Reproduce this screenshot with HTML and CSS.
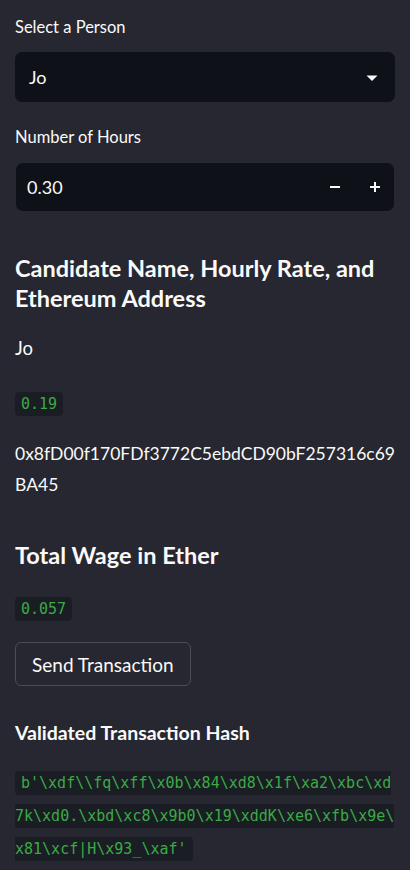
FILE: index.html
```html
<!DOCTYPE html>
<html lang="en">
<head>
<meta charset="utf-8">
<title>Sidebar</title>
<link rel="stylesheet" href="styles.css">
</head>
<body>
<aside class="sidebar">
  <div class="field">
    <label class="label">Select a Person</label>
    <div class="select">
      <span class="value">Jo</span>
      <svg class="caret" width="12" height="8" viewBox="0 0 12 8"><path d="M0.5 1.5h11L6 7z" fill="#fafafa"/></svg>
    </div>
  </div>
  <div class="field">
    <label class="label">Number of Hours</label>
    <div class="number">
      <span class="value">0.30</span>
      <span class="steps">
        <svg width="12" height="12" viewBox="0 0 12 12"><rect x="1" y="5" width="10" height="2" fill="#fafafa"/></svg>
        <svg width="12" height="12" viewBox="0 0 12 12"><rect x="1" y="5" width="10" height="2" fill="#fafafa"/><rect x="5" y="1" width="2" height="10" fill="#fafafa"/></svg>
      </span>
    </div>
  </div>
  <h3 class="h3 first">Candidate Name, Hourly Rate, and Ethereum Address</h3>
  <p class="text name">Jo</p>
  <p class="text codeline rate"><code class="code">0.19</code></p>
  <p class="text addr">0x8fD00f170FDf3772C5ebdCD90bF257316c69BA45</p>
  <h3 class="h3 second">Total Wage in Ether</h3>
  <p class="text codeline wage"><code class="code">0.057</code></p>
  <button class="btn">Send Transaction</button>
  <h4 class="h4">Validated Transaction Hash</h4>
  <p class="hash"><code class="code wrap">b'\xdf\\fq\xff\x0b\x84\xd8\x1f\xa2\xbc\xd7k\xd0.\xbd\xc8\x9b0\x19\xddK\xe6\xfb\x9e\x81\xcf|H\x93_\xaf'</code></p>
</aside>
</body>
</html>
```
FILE: styles.css
```css
html, body {
  margin: 0;
  padding: 0;
  background: #262730;
}
body {
  width: 410px;
  height: 870px;
  overflow: hidden;
  font-family: "Lato", "Open Sans", sans-serif;
  color: #fafafa;
}
.sidebar {
  padding: 16px 15px 0 15px;
  display: flex;
  flex-direction: column;
}
.field {
  display: flex;
  flex-direction: column;
  margin-bottom: 24px;
}
.field + .field { margin-bottom: 0; }
.label {
  font-size: 16.5px;
  line-height: 22px;
  margin-bottom: 14px;
}
.field + .field .label { margin-bottom: 15px; }
.select, .number {
  background: #0e1117;
  border-radius: 7px;
  height: 50px;
  display: flex;
  align-items: center;
  justify-content: space-between;
  box-sizing: border-box;
}
.select { padding: 0 17px 0 14px; }
.number { height: 48px; padding: 0 13px 0 11px; margin: 0 1px; }
.value { font-size: 18px; }
.caret { margin-top: 1px; }
.steps {
  display: flex;
  gap: 28px;
  align-items: center;
}
.h3 {
  margin: 0;
  font-size: 23.5px;
  font-weight: 700;
  line-height: 30px;
}
.h3.first { margin-top: 42px; }
.h3.second { margin-top: 40px; }
.text {
  margin: 0;
  font-size: 18.5px;
  line-height: 28px;
}
.name { margin-top: 21px; }
.rate { margin-top: 26px; }
.addr {
  margin-top: 20px;
  font-size: 17.5px;
  line-height: 31px;
  width: 380px;
  word-break: break-all;
}
.wage { margin-top: 23px; }
.code {
  font-family: "DejaVu Sans Mono", monospace;
  font-size: 15px;
  color: #3aaa45;
  background: #1b1d24;
  border-radius: 4px;
  padding: 3px 6px;
}
.btn {
  align-self: flex-start;
  margin-top: 19px;
  height: 44px;
  padding: 0 16px;
  background: #262730;
  border: 1px solid #4b4c55;
  border-radius: 6px;
  color: #fafafa;
  font-family: inherit;
  font-size: 19px;
}
.h4 {
  margin: 35px 0 0 0;
  font-size: 19.5px;
  font-weight: 700;
  line-height: 24px;
}
.hash {
  margin: 21px 0 0 0;
  line-height: 32px;
  width: 382px;
  word-break: break-all;
  line-break: anywhere;
}
.code.wrap {
  padding: 3px 6px;
  line-height: 32px;
}
```
